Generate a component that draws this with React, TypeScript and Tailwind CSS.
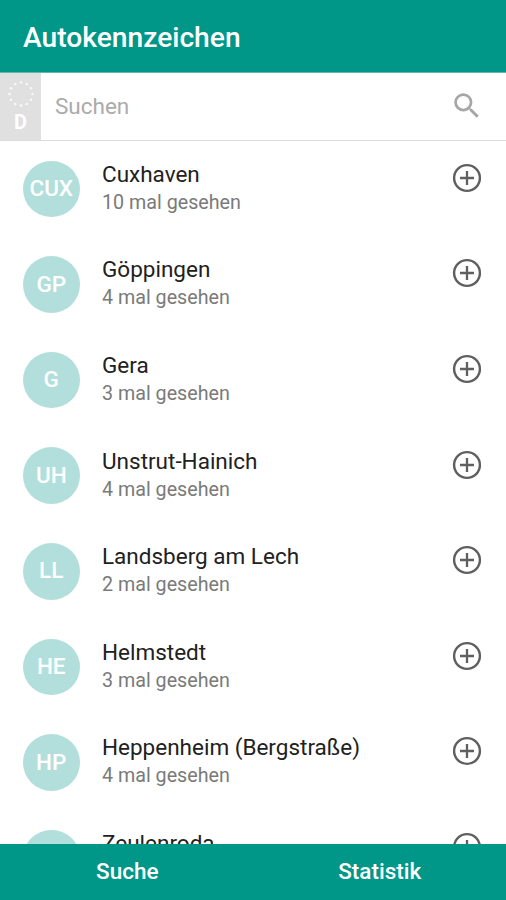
import { MdSearch } from "react-icons/md"

type Place = { code?: string; name: string; seen?: number }

const places: Place[] = [
  { code: "CUX", name: "Cuxhaven", seen: 10 },
  { code: "GP", name: "Göppingen", seen: 4 },
  { code: "G", name: "Gera", seen: 3 },
  { code: "UH", name: "Unstrut-Hainich", seen: 4 },
  { code: "LL", name: "Landsberg am Lech", seen: 2 },
  { code: "HE", name: "Helmstedt", seen: 3 },
  { code: "HP", name: "Heppenheim (Bergstraße)", seen: 4 },
  { name: "Zeulenroda" },
]

const stars = Array.from({ length: 12 }, (_, i) => {
  const angle = (i * Math.PI) / 6
  return { x: 14 + 11.5 * Math.sin(angle), y: 14 - 11.5 * Math.cos(angle) }
})

function CountryStrip() {
  return (
    <div className="flex h-full w-[41px] flex-col items-center bg-[#e0e0e0] pt-[7px]">
      <svg className="h-7 w-7 shrink-0" viewBox="0 0 28 28" fill="#f8f8f8">
        {stars.map((star, i) => (
          <circle key={i} cx={star.x} cy={star.y} r="1.3" />
        ))}
      </svg>
      <span className="mt-[3px] text-[20px] leading-[22px] font-bold text-white">D</span>
    </div>
  )
}

function AddIcon() {
  return (
    <svg className="h-[34px] w-[34px]" viewBox="0 0 34 34" fill="none" stroke="#5f5f5f">
      <circle cx="17" cy="17" r="12.9" strokeWidth="2.4" />
      <path d="M17 10v14M10 17h14" strokeWidth="2.3" />
    </svg>
  )
}

function PlaceRow({ code, name, seen }: Place) {
  return (
    <li className="flex h-[95.65px] shrink-0 items-start pr-[22px] pl-[23px]">
      <div className="mt-[19.5px] flex h-[56.5px] w-[56.5px] items-center justify-center rounded-full bg-[#b2dfdb] text-[22.5px] font-medium text-white">
        {code}
      </div>
      <div className="ml-[22.5px] flex-1 pt-[18.6px]">
        <p className="text-[22.5px] leading-7 text-[#212121]">{name}</p>
        {seen && <p className="text-[19.7px] leading-[29px] text-[#7a7a7a]">{seen} mal gesehen</p>}
      </div>
      <button className="mt-[19.6px]" aria-label="Hinzufügen">
        <AddIcon />
      </button>
    </li>
  )
}

export default function App() {
  return (
    <div className="flex h-[900px] w-[506px] flex-col overflow-hidden bg-white font-[Roboto,sans-serif]">
      <header className="flex h-[73px] shrink-0 items-center border-b border-[#65b5ab] bg-[#009688] pt-[5px] pl-[23px]">
        <h1 className="text-[28.2px] font-medium text-white">Autokennzeichen</h1>
      </header>
      <div className="flex h-[68px] shrink-0 items-center border-b border-[#dcdcdc]">
        <CountryStrip />
        <input
          className="ml-[14px] min-w-0 flex-1 text-[22.5px] text-[#757575] outline-none placeholder:text-[#ababab]"
          placeholder="Suchen"
        />
        <MdSearch className="mr-[22px] mb-0.5 h-[33.7px] w-[33.7px] text-[#a6a6a6]" />
      </div>
      <ul className="flex min-h-0 flex-1 flex-col overflow-hidden">
        {places.map((place) => (
          <PlaceRow key={place.name} {...place} />
        ))}
      </ul>
      <nav className="grid h-14 shrink-0 grid-cols-2 bg-[#009688] pl-px text-[22.5px] font-medium text-white">
        <button>Suche</button>
        <button>Statistik</button>
      </nav>
    </div>
  )
}
